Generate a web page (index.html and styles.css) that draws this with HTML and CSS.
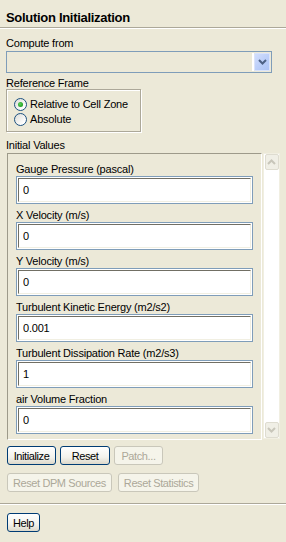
FILE: index.html
```html
<!DOCTYPE html>
<html lang="en">
<head>
    <meta charset="UTF-8">
    <meta name="viewport" content="width=device-width, initial-scale=1.0">
    <title>Solution Initialization</title>
    <link rel="stylesheet" href="styles.css">
</head>
<body>
    <div class="panel">
        <div class="title">Solution Initialization</div>

        <div class="compute-section">
            <div class="label">Compute from</div>
            <div class="combo">
                <div class="combo-field"></div>
                <div class="combo-btn">
                    <svg width="9" height="6" viewBox="0 0 9 6">
                        <path d="M1 1 L4.5 4.5 L8 1" fill="none" stroke="#4d6185" stroke-width="2"/>
                    </svg>
                </div>
            </div>
        </div>

        <div class="frame-section">
            <div class="label">Reference Frame</div>
            <div class="group">
                <div class="radio"><span class="radio-dot checked"></span>Relative to Cell Zone</div>
                <div class="radio"><span class="radio-dot"></span>Absolute</div>
            </div>
        </div>

        <div class="values-section">
            <div class="label">Initial Values</div>
            <div class="values">
                <div class="values-list">
                    <div class="field">
                        <div class="label">Gauge Pressure (pascal)</div>
                        <div class="field-box"><input class="field-input" type="text" value="0"></div>
                    </div>
                    <div class="field">
                        <div class="label">X Velocity (m/s)</div>
                        <div class="field-box"><input class="field-input" type="text" value="0"></div>
                    </div>
                    <div class="field">
                        <div class="label">Y Velocity (m/s)</div>
                        <div class="field-box"><input class="field-input" type="text" value="0"></div>
                    </div>
                    <div class="field">
                        <div class="label">Turbulent Kinetic Energy (m2/s2)</div>
                        <div class="field-box"><input class="field-input" type="text" value="0.001"></div>
                    </div>
                    <div class="field">
                        <div class="label">Turbulent Dissipation Rate (m2/s3)</div>
                        <div class="field-box"><input class="field-input" type="text" value="1"></div>
                    </div>
                    <div class="field">
                        <div class="label">air Volume Fraction</div>
                        <div class="field-box"><input class="field-input" type="text" value="0"></div>
                    </div>
                </div>
                <div class="scrollbar">
                    <div class="scroll-btn">
                        <svg width="9" height="6" viewBox="0 0 9 6">
                            <path d="M1 5 L4.5 1.5 L8 5" fill="none" stroke="#c8c6ba" stroke-width="2"/>
                        </svg>
                    </div>
                    <div class="scroll-track"></div>
                    <div class="scroll-btn">
                        <svg width="9" height="6" viewBox="0 0 9 6">
                            <path d="M1 1 L4.5 4.5 L8 1" fill="none" stroke="#c8c6ba" stroke-width="2"/>
                        </svg>
                    </div>
                </div>
            </div>
        </div>

        <div class="actions">
            <div class="btn-row">
                <button class="btn">Initialize</button>
                <button class="btn btn-reset">Reset</button>
                <button class="btn" disabled>Patch...</button>
            </div>
            <div class="btn-row btn-row-wide">
                <button class="btn" disabled>Reset DPM Sources</button>
                <button class="btn" disabled>Reset Statistics</button>
            </div>
        </div>

        <div class="footer">
            <button class="btn btn-help">Help</button>
        </div>
    </div>
</body>
</html>
```

FILE: styles.css
```css
* {
    margin: 0;
    padding: 0;
    box-sizing: border-box;
}

body {
    font-family: 'Liberation Sans', Arial, sans-serif;
    font-size: 11px;
    background-color: #ece9d8;
    color: #000;
    width: 286px;
    height: 542px;
    overflow: hidden;
}

.label {
    line-height: 12px;
    height: 12px;
    white-space: nowrap;
    letter-spacing: -0.2px;
}

.title {
    height: 28px;
    padding: 10px 6px 0;
    font-size: 13px;
    font-weight: bold;
    line-height: 15px;
    letter-spacing: -0.3px;
    border-bottom: 1px solid #aca899;
    box-shadow: 0 1px 0 #fff;
}

/* Compute from */
.compute-section {
    padding: 9px 6px 0;
}

.compute-section .label {
    margin-bottom: 2px;
}

.combo {
    display: flex;
    width: 266px;
    height: 22px;
    border: 1px solid #7f9db9;
    padding: 1px 1px 1px 0;
}

.combo-field {
    flex: 1;
    border-right: 2px solid #fff;
}

.combo-btn {
    width: 16px;
    display: flex;
    align-items: center;
    justify-content: center;
    background: linear-gradient(135deg, #d2defc 0%, #b9cdf9 60%, #aec4f6 100%);
    border: 1px solid #d9e3fb;
    border-radius: 1px;
}

/* Reference frame */
.frame-section {
    padding: 4px 6px 0;
}

.group {
    width: 135px;
    height: 43px;
    border: 1px solid #aca899;
    box-shadow: inset 1px 1px 0 #fff, 1px 1px 0 #fff;
    padding: 7px 0 0 7px;
}

.radio {
    display: flex;
    align-items: center;
    height: 15px;
    line-height: 13px;
    white-space: nowrap;
    letter-spacing: -0.2px;
}

.radio-dot {
    width: 13px;
    height: 13px;
    border: 1px solid #1c5180;
    border-radius: 50%;
    background: linear-gradient(135deg, #dcdcd7 0%, #fff 80%);
    margin-right: 3px;
    display: flex;
    align-items: center;
    justify-content: center;
}

.radio-dot.checked::after {
    content: "";
    width: 5px;
    height: 5px;
    border-radius: 50%;
    background: radial-gradient(circle at 40% 40%, #5ed15e 0%, #21a121 70%);
}

/* Initial values */
.values-section {
    padding: 7px 6px 0 7px;
}

.values-section > .label {
    margin-left: -1px;
    margin-bottom: 2px;
}

.values {
    display: flex;
    gap: 1px;
}

.values-list {
    width: 255px;
    height: 287px;
    border: 1px solid;
    border-color: #9d9a8a #fff #fff #9d9a8a;
    padding: 9px 8px 5px 8px;
}

.field {
    margin-bottom: 5px;
}

.field .label {
    margin-bottom: 1px;
}

.field-box {
    height: 28px;
    border: 1px solid #7f9db9;
    background-color: #fff;
    padding: 1px;
}

.field-input {
    width: 100%;
    height: 100%;
    border: 1px solid;
    border-color: #716f64 #f1efe2 #f1efe2 #716f64;
    font-family: 'Liberation Sans', Arial, sans-serif;
    font-size: 11px;
    letter-spacing: -0.2px;
    padding: 0 4px;
    outline: none;
    background-color: #fff;
}

.scrollbar {
    width: 17px;
    height: 286px;
    background-color: #fff;
    border: 1px solid #f1efe2;
    display: flex;
    flex-direction: column;
    align-items: center;
    padding: 0 1px;
}

.scroll-btn {
    width: 14px;
    height: 16px;
    background-color: #f0efe6;
    border: 1px solid #dedcd0;
    border-radius: 2px;
    display: flex;
    align-items: center;
    justify-content: center;
}

.scroll-track {
    flex: 1;
}

/* Buttons */
.actions {
    padding: 6px 7px 0;
}

.btn-row {
    display: flex;
    gap: 4px;
    margin-bottom: 8px;
}

.btn-row-wide {
    gap: 6px;
}

.btn {
    height: 19px;
    min-width: 49px;
    padding: 0 5px;
    border: 1px solid #003c74;
    border-radius: 3px;
    background: linear-gradient(180deg, #fff 0%, #f3f2ec 60%, #dcd8ca 100%);
    font-family: 'Liberation Sans', Arial, sans-serif;
    font-size: 11px;
    letter-spacing: -0.4px;
    color: #000;
    white-space: nowrap;
}

.btn-reset {
    min-width: 50px;
}

.btn:disabled {
    border-color: #c9c7ba;
    background: #f5f4ea;
    color: #aca899;
}

.btn-help {
    min-width: 32px;
}

.footer {
    margin-top: 11px;
    padding: 9px 7px 0;
    border-top: 1px solid #aca899;
    box-shadow: inset 0 1px 0 #fff;
}
```
